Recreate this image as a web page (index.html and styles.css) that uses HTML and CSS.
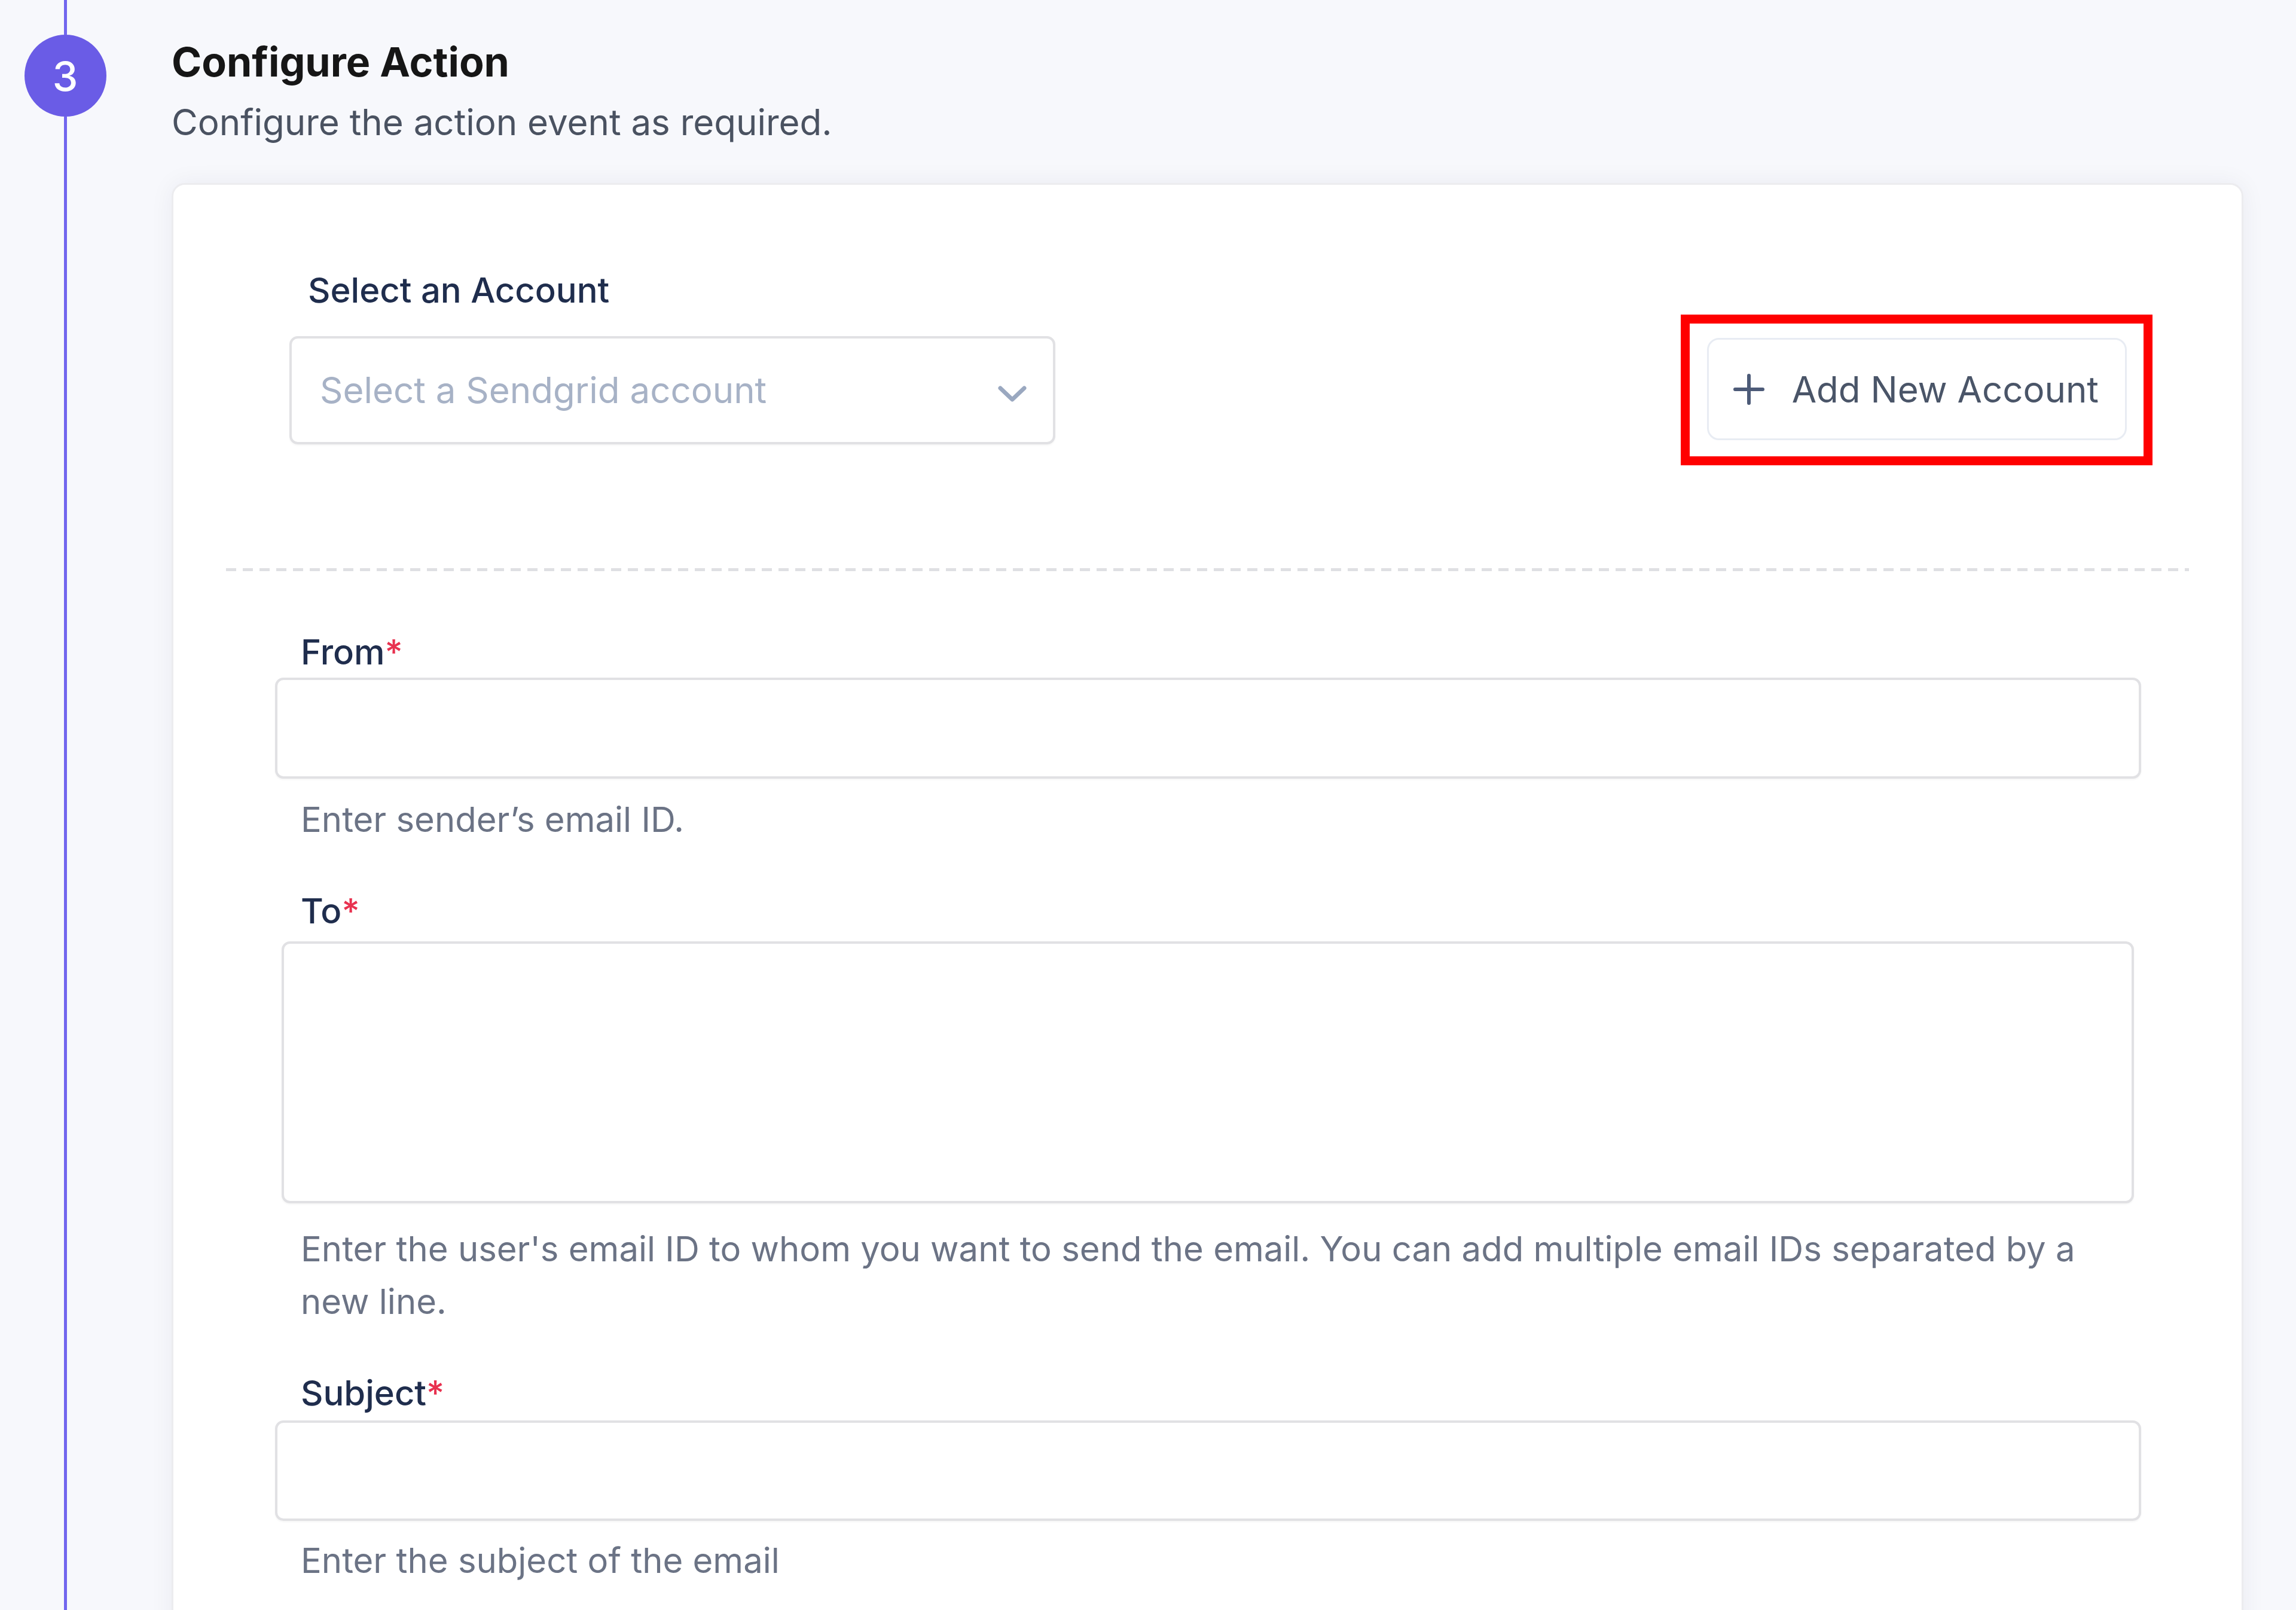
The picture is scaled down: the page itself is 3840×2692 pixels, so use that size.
FILE: index.html
```html
<!DOCTYPE html>
<html lang="en">
<head>
    <meta charset="UTF-8">
    <meta name="viewport" content="width=device-width, initial-scale=1.0">
    <title>Configure Action</title>
    <link rel="stylesheet" href="styles.css">
</head>
<body>
    <div class="step">
        <div class="rail">
            <span class="rail-line rail-top"></span>
            <span class="step-number">3</span>
            <span class="rail-line rail-rest"></span>
        </div>
        <div class="step-body">
            <h2 class="step-title">Configure Action</h2>
            <p class="step-desc">Configure the action event as required.</p>

            <div class="card">
                <div class="account-row">
                    <label class="account-label">Select an Account</label>
                    <div class="select">
                        <span class="select-placeholder">Select a Sendgrid account</span>
                        <svg class="chevron" viewBox="0 0 50 30" width="50" height="30">
                            <path d="M5 5 L25 24 L45 5" fill="none" stroke="currentColor" stroke-width="7" stroke-linecap="round" stroke-linejoin="round"/>
                        </svg>
                    </div>
                    <div class="highlight">
                        <button class="add-btn">
                            <svg class="plus" viewBox="0 0 52 52" width="52" height="52">
                                <path d="M26 3 V49 M3 26 H49" fill="none" stroke="currentColor" stroke-width="6" stroke-linecap="round"/>
                            </svg>
                            <span>Add New Account</span>
                        </button>
                    </div>
                </div>

                <div class="divider"></div>

                <div class="fields">
                    <div class="field">
                        <label class="field-label">From<span class="req">*</span></label>
                        <input type="text" class="field-input">
                        <p class="field-help">Enter sender’s email ID.</p>
                    </div>
                    <div class="field field-to">
                        <label class="field-label">To<span class="req">*</span></label>
                        <textarea class="field-input field-area"></textarea>
                        <p class="field-help">Enter the user's email ID to whom you want to send the email. You can add multiple email IDs separated by a new line.</p>
                    </div>
                    <div class="field field-subject">
                        <label class="field-label">Subject<span class="req">*</span></label>
                        <input type="text" class="field-input">
                        <p class="field-help">Enter the subject of the email</p>
                    </div>
                </div>
            </div>
        </div>
    </div>
</body>
</html>
```

FILE: styles.css
```css
body {
    margin: 0;
    background-color: #f7f8fc;
    font-family: Inter, "Noto Sans", sans-serif;
    color: #1f2d4d;
}
.step {
    display: flex;
    height: 2692px;
    overflow: hidden;
}
.rail {
    width: 218px;
    flex: none;
    display: flex;
    flex-direction: column;
    align-items: center;
}
.rail-line {
    width: 5px;
    background-color: #7266ee;
}
.rail-top {
    height: 58px;
}
.rail-rest {
    flex: 1;
}
.step-number {
    width: 137px;
    height: 137px;
    border-radius: 50%;
    background-color: #6a5ce6;
    color: #fff;
    font-size: 68px;
    font-weight: 500;
    display: flex;
    align-items: center;
    justify-content: center;
}
.step-body {
    flex: 1;
    padding: 62px 88px 0 69px;
}
.step-title {
    margin: 0;
    font-size: 68px;
    line-height: 82px;
    font-weight: 700;
    color: #161616;
}
.step-desc {
    margin: 24px 0 0;
    font-size: 60px;
    line-height: 72px;
    color: #4a5261;
}
.card {
    margin-top: 66px;
    background-color: #fff;
    border: 3px solid #ececef;
    border-radius: 22px;
    box-shadow: 0 0 40px rgba(20, 30, 60, 0.06);
    padding: 141px 88px 0;
    height: 2400px;
}
.account-row {
    display: grid;
    grid-template-columns: 1281px 1fr auto;
    row-gap: 6px;
    align-items: center;
    padding: 0 61px 0 106px;
}
.account-label {
    grid-column: 1;
    padding-left: 31px;
    font-size: 58px;
    line-height: 70px;
    font-weight: 500;
}
.select {
    grid-column: 1;
    grid-row: 2;
    box-sizing: border-box;
    height: 181px;
    border: 4px solid #e1e1e4;
    border-radius: 14px;
    box-shadow: 0 2px 3px rgba(0, 0, 0, 0.04);
    display: flex;
    align-items: center;
    justify-content: space-between;
    padding: 0 43px 0 47px;
}
.select-placeholder {
    font-size: 60px;
    color: #a7b2c6;
}
.chevron {
    color: #9aa8c0;
    margin-top: 14px;
}
.highlight {
    grid-column: 3;
    grid-row: 2;
    border: 15px solid #ff0000;
    padding: 24px 28px 27px 29px;
}
.add-btn {
    box-sizing: border-box;
    height: 171px;
    border: 3px solid #e8ecf3;
    border-radius: 20px;
    background-color: #fff;
    display: flex;
    align-items: center;
    gap: 46px;
    padding: 0 44px 0 41px;
    font-family: Inter, "Noto Sans", sans-serif;
    font-size: 60px;
    color: #4a5568;
}
.plus {
    color: #4d5b78;
}
.divider {
    margin-top: 172px;
    height: 5px;
    background: repeating-linear-gradient(to right, #dfe0e3 0 17px, transparent 17px 28px);
}
.fields {
    padding: 100px 80px 0 82px;
    display: flex;
    flex-direction: column;
    gap: 74px;
}
.field {
    display: flex;
    flex-direction: column;
}
.field-label {
    padding-left: 43px;
    font-size: 58px;
    line-height: 70px;
    font-weight: 500;
    margin-bottom: 8px;
}
.req {
    color: #e8314f;
}
.field-input {
    box-sizing: border-box;
    height: 169px;
    border: 4px solid #e1e1e4;
    border-radius: 14px;
    box-shadow: 0 2px 3px rgba(0, 0, 0, 0.04);
    background-color: #fff;
    font-family: inherit;
    font-size: 56px;
    padding: 0 40px;
    outline: none;
}
.field-area {
    height: 438px;
    margin: 0 12px 0 11px;
    resize: none;
}
.field-help {
    margin: 24px 0 0;
    padding-left: 43px;
    font-size: 58px;
    line-height: 88px;
    color: #6b7385;
}
.field-to .field-label {
    margin-bottom: 16px;
}
.field-to .field-help {
    margin-top: 32px;
}
.field-subject .field-label {
    margin-bottom: 11px;
}
.field-subject .field-input {
    height: 168px;
}
.field-subject .field-help {
    margin-top: 22px;
}
```
